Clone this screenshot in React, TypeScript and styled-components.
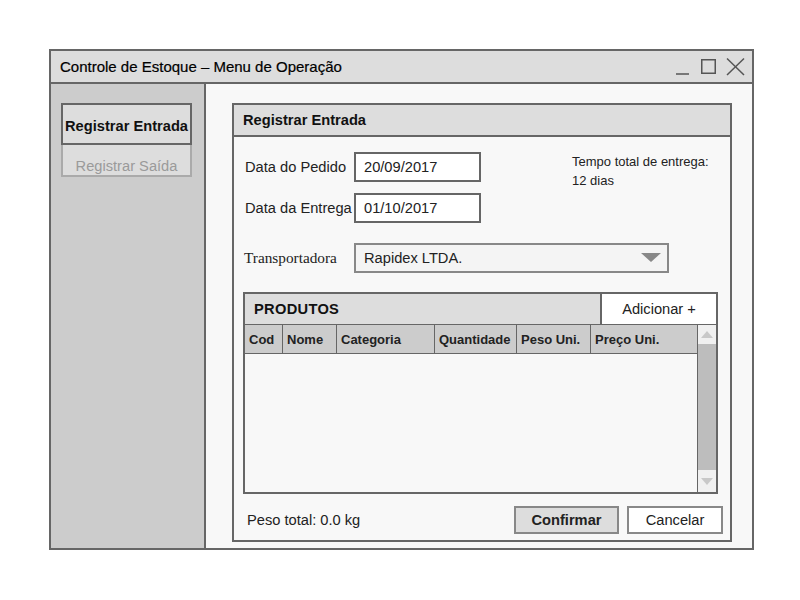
import React from "react";
import styled, { createGlobalStyle } from "styled-components";

const Global = createGlobalStyle`
  html, body { margin: 0; padding: 0; background: #ffffff; }
  body { font-family: "Liberation Sans", Arial, sans-serif; color: #1a1a1a; }
  * { box-sizing: border-box; }
`;

const Page = styled.div`
  width: 800px;
  height: 600px;
  padding: 49px 0 0 49px;
`;

const Window = styled.div`
  width: 705px;
  height: 501px;
  border: 2px solid #666;
  display: flex;
  flex-direction: column;
  background: #f8f8f8;
`;

const TitleBar = styled.div`
  height: 33px;
  border-bottom: 2px solid #666;
  background: #dddddd;
  display: flex;
  align-items: center;
  justify-content: space-between;
  padding: 0 5px 0 9px;
  font-size: 15px;
  color: #000;
  -webkit-text-stroke: 0.2px #000;
`;

const Controls = styled.div`
  display: flex;
  align-items: center;
`;

const Body = styled.div`
  flex: 1;
  display: flex;
  min-height: 0;
`;

const Sidebar = styled.div`
  width: 155px;
  background: #cccccc;
  border-right: 2px solid #666;
  padding: 19px 0 0 10px;
  display: flex;
  flex-direction: column;
`;

const NavButton = styled.div<{ $active?: boolean }>`
  width: 131px;
  height: ${(p) => (p.$active ? "42px" : "32px")};
  display: flex;
  align-items: center;
  justify-content: center;
  padding-top: ${(p) => (p.$active ? "3px" : "12px")};
  background: #dddddd;
  border: 2px solid ${(p) => (p.$active ? "#666" : "#aaa")};
  border-top: ${(p) => (p.$active ? "2px solid #666" : "none")};
  font-size: 14.67px;
  font-weight: ${(p) => (p.$active ? 700 : 400)};
  color: ${(p) => (p.$active ? "#111" : "#9a9a9a")};
  white-space: nowrap;
`;

const Main = styled.div`
  flex: 1;
  padding: 19px 0 0 26px;
`;

const Panel = styled.div`
  width: 500px;
  height: 439px;
  border: 2px solid #666;
  background: #f8f8f8;
  display: flex;
  flex-direction: column;
`;

const PanelHeader = styled.div`
  height: 32px;
  border-bottom: 2px solid #666;
  background: #dddddd;
  display: flex;
  align-items: center;
  padding-left: 9px;
  font-size: 14.67px;
  font-weight: 700;
  color: #111;
`;

const PanelContent = styled.div`
  flex: 1;
  display: flex;
  flex-direction: column;
  padding: 15px 7px 6px 9px;
`;

const TopRow = styled.div`
  display: flex;
  justify-content: space-between;
`;

const DateFields = styled.div`
  display: grid;
  grid-template-columns: 109px 127px;
  row-gap: 11px;
  align-items: center;
  padding-left: 2px;
`;

const Label = styled.div`
  font-size: 14.67px;
  color: #222;
  white-space: nowrap;
`;

const Input = styled.div`
  height: 30px;
  border: 2px solid #666;
  background: #ffffff;
  display: flex;
  align-items: center;
  padding-left: 8px;
  font-size: 14.67px;
  color: #222;
`;

const Delivery = styled.div`
  width: 151px;
  font-size: 13px;
  line-height: 19px;
  color: #222;
`;

const CarrierRow = styled.div`
  display: flex;
  align-items: center;
  margin-top: 20px;
`;

const SerifLabel = styled.div`
  width: 111px;
  padding-left: 1px;
  font-family: "Liberation Serif", "Times New Roman", serif;
  font-size: 15.3px;
  color: #222;
  white-space: nowrap;
`;

const Select = styled.div`
  width: 315px;
  height: 30px;
  border: 2px solid #888;
  background: #f4f4f4;
  display: flex;
  align-items: center;
  justify-content: space-between;
  padding: 0 6px 0 8px;
  font-size: 14.67px;
  color: #222;
`;

const Table = styled.div`
  margin-top: 19px;
  width: 475px;
  height: 202px;
  border: 2px solid #666;
  display: flex;
  flex-direction: column;
  background: #f8f8f8;
`;

const TableTitleBar = styled.div`
  height: 31px;
  display: flex;
  border-bottom: 1px solid #666;
  background: #dddddd;
`;

const TableTitle = styled.div`
  flex: 1;
  display: flex;
  align-items: center;
  padding-left: 9px;
  font-size: 14.67px;
  font-weight: 700;
  letter-spacing: 0.3px;
  color: #111;
`;

const AddButton = styled.div`
  width: 116px;
  border-left: 2px solid #666;
  background: #ffffff;
  display: flex;
  align-items: center;
  justify-content: center;
  font-size: 14.67px;
  color: #222;
`;

const TableBody = styled.div`
  flex: 1;
  display: flex;
  min-height: 0;
`;

const Grid = styled.div`
  flex: 1;
  display: flex;
  flex-direction: column;
`;

const HeadRow = styled.div`
  height: 29px;
  display: flex;
  background: #cccccc;
  border-bottom: 1px solid #666;
`;

const HeadCell = styled.div<{ $w: number; $last?: boolean }>`
  width: ${(p) => p.$w}px;
  flex: ${(p) => (p.$last ? 1 : "none")};
  border-right: ${(p) => (p.$last ? "none" : "1px solid #666")};
  display: flex;
  align-items: center;
  padding-left: 4px;
  font-size: 13px;
  font-weight: 700;
  color: #222;
  white-space: nowrap;
`;

const Scrollbar = styled.div`
  width: 19px;
  border-left: 1px solid #666;
  display: flex;
  flex-direction: column;
  background: #bdbdbd;
`;

const ScrollArrow = styled.div<{ $h: number }>`
  height: ${(p) => p.$h}px;
  background: #f0f0f0;
  display: flex;
  align-items: center;
  justify-content: center;
`;

const ScrollThumb = styled.div`
  flex: 1;
  background: #bdbdbd;
`;

const Footer = styled.div`
  margin-top: auto;
  display: flex;
  align-items: center;
  justify-content: space-between;
  padding-left: 4px;
`;

const FooterText = styled.div`
  font-size: 14.67px;
  color: #222;
`;

const Buttons = styled.div`
  display: flex;
  gap: 8px;
`;

const Btn = styled.div<{ $primary?: boolean }>`
  height: 28px;
  width: ${(p) => (p.$primary ? "105px" : "96px")};
  border: 2px solid #888;
  background: ${(p) => (p.$primary ? "#dddddd" : "#ffffff")};
  display: flex;
  align-items: center;
  justify-content: center;
  font-size: 14.67px;
  font-weight: ${(p) => (p.$primary ? 700 : 400)};
  color: #222;
`;

const cols = [
  { name: "Cod", w: 38 },
  { name: "Nome", w: 54 },
  { name: "Categoria", w: 98 },
  { name: "Quantidade", w: 82 },
  { name: "Peso Uni.", w: 74 },
  { name: "Preço Uni.", w: 106 },
];

export default function App() {
  return (
    <>
      <Global />
      <Page>
        <Window>
          <TitleBar>
            <span>Controle de Estoque – Menu de Operação</span>
            <Controls>
              <svg width="74" height="22" viewBox="0 0 74 22">
                <line x1="3" y1="18" x2="16" y2="18" stroke="#555" strokeWidth="1.5" />
                <rect x="28.75" y="3.75" width="13.5" height="13.5" fill="none" stroke="#555" strokeWidth="1.5" />
                <line x1="54" y1="2.5" x2="71" y2="19" stroke="#555" strokeWidth="1.5" />
                <line x1="71" y1="2.5" x2="54" y2="19" stroke="#555" strokeWidth="1.5" />
              </svg>
            </Controls>
          </TitleBar>
          <Body>
            <Sidebar>
              <NavButton $active>Registrar Entrada</NavButton>
              <NavButton>Registrar Saída</NavButton>
            </Sidebar>
            <Main>
              <Panel>
                <PanelHeader>Registrar Entrada</PanelHeader>
                <PanelContent>
                  <TopRow>
                    <DateFields>
                      <Label>Data do Pedido</Label>
                      <Input>20/09/2017</Input>
                      <Label>Data da Entrega</Label>
                      <Input>01/10/2017</Input>
                    </DateFields>
                    <Delivery>
                      Tempo total de entrega:
                      <br />
                      12 dias
                    </Delivery>
                  </TopRow>
                  <CarrierRow>
                    <SerifLabel>Transportadora</SerifLabel>
                    <Select>
                      <span>Rapidex LTDA.</span>
                      <svg width="20" height="10" viewBox="0 0 20 10">
                        <polygon points="0,0 20,0 10,9" fill="#888" />
                      </svg>
                    </Select>
                  </CarrierRow>
                  <Table>
                    <TableTitleBar>
                      <TableTitle>PRODUTOS</TableTitle>
                      <AddButton>Adicionar +</AddButton>
                    </TableTitleBar>
                    <TableBody>
                      <Grid>
                        <HeadRow>
                          {cols.map((c, i) => (
                            <HeadCell key={c.name} $w={c.w} $last={i === cols.length - 1}>
                              {c.name}
                            </HeadCell>
                          ))}
                        </HeadRow>
                      </Grid>
                      <Scrollbar>
                        <ScrollArrow $h={19}>
                          <svg width="12" height="7" viewBox="0 0 12 7">
                            <polygon points="0,7 12,7 6,0" fill="#c8c8c8" />
                          </svg>
                        </ScrollArrow>
                        <ScrollThumb />
                        <ScrollArrow $h={22}>
                          <svg width="12" height="7" viewBox="0 0 12 7">
                            <polygon points="0,0 12,0 6,7" fill="#c8c8c8" />
                          </svg>
                        </ScrollArrow>
                      </Scrollbar>
                    </TableBody>
                  </Table>
                  <Footer>
                    <FooterText>Peso total: 0.0 kg</FooterText>
                    <Buttons>
                      <Btn $primary>Confirmar</Btn>
                      <Btn>Cancelar</Btn>
                    </Buttons>
                  </Footer>
                </PanelContent>
              </Panel>
            </Main>
          </Body>
        </Window>
      </Page>
    </>
  );
}
